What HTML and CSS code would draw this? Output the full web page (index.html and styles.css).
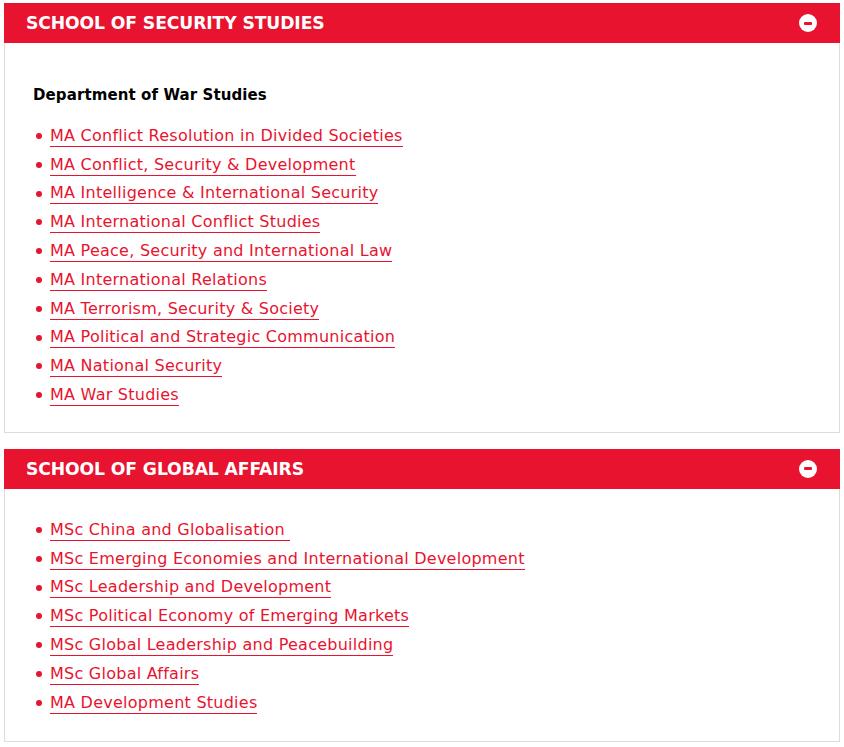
FILE: index.html
```html
<!DOCTYPE html>
<html>
<head>
<meta charset="utf-8">
<link rel="stylesheet" href="styles.css">
</head>
<body>
<div class="page">
  <section class="panel">
    <div class="panel-head">
      <h2 class="panel-title">SCHOOL OF SECURITY STUDIES</h2>
      <span class="toggle"><span class="toggle-bar"></span></span>
    </div>
    <div class="panel-body">
      <h3 class="dept">Department of War Studies</h3>
      <ul class="courses">
        <li><a href="#">MA Conflict Resolution in Divided Societies</a></li>
        <li><a href="#">MA Conflict, Security &amp; Development</a></li>
        <li><a href="#">MA Intelligence &amp; International Security</a></li>
        <li><a href="#">MA International Conflict Studies</a></li>
        <li><a href="#">MA Peace, Security and International Law</a></li>
        <li><a href="#">MA International Relations</a></li>
        <li><a href="#">MA Terrorism, Security &amp; Society</a></li>
        <li><a href="#">MA Political and Strategic Communication</a></li>
        <li><a href="#">MA National Security</a></li>
        <li><a href="#">MA War Studies</a></li>
      </ul>
    </div>
  </section>
  <section class="panel">
    <div class="panel-head">
      <h2 class="panel-title">SCHOOL OF GLOBAL AFFAIRS</h2>
      <span class="toggle"><span class="toggle-bar"></span></span>
    </div>
    <div class="panel-body panel-body-plain">
      <ul class="courses">
        <li><a href="#">MSc China and Globalisation&nbsp;</a></li>
        <li><a href="#">MSc Emerging Economies and International Development</a></li>
        <li><a href="#">MSc Leadership and Development</a></li>
        <li><a href="#">MSc Political Economy of Emerging Markets</a></li>
        <li><a href="#">MSc Global Leadership and Peacebuilding</a></li>
        <li><a href="#">MSc Global Affairs</a></li>
        <li><a href="#">MA Development Studies</a></li>
      </ul>
    </div>
  </section>
</div>
</body>
</html>
```
FILE: styles.css
```css
* { box-sizing: border-box; }
html, body { margin: 0; padding: 0; background: #fff; }
body { font-family: "DejaVu Sans", "Open Sans", sans-serif; color: #000; }
.page { padding: 3px 4px 0 4px; display: flex; flex-direction: column; gap: 16px; width: 844px; }
.panel { border: 1px solid #dcdcdc; border-top: none; }
.panel-head {
  height: 40px; background: #e8132f; display: flex; align-items: center;
  justify-content: space-between; padding: 0 23px 0 22px; margin: 0 -1px;
}
.panel-title { margin: 0; color: #fff; font-size: 17.2px; font-weight: bold; letter-spacing: -0.1px; }
.toggle {
  width: 18px; height: 18px; border-radius: 50%; background: #fff;
  display: flex; align-items: center; justify-content: center;
}
.toggle-bar { width: 8px; height: 3px; background: #e8132f; border-radius: 1px; }
.panel-body { padding: 43px 28px 22px 28px; }
.panel-body-plain { padding-top: 27px; padding-bottom: 23px; }
.dept { margin: 0 0 18px 0; font-size: 15px; font-weight: bold; letter-spacing: 0.1px; }
.courses { list-style: none; margin: 0; padding: 0; }
.courses li { position: relative; padding-left: 17px; height: 28.8px; display: flex; align-items: center; }
.courses li::before {
  content: ""; position: absolute; left: 3px; top: 11px; width: 6px; height: 6px;
  border-radius: 50%; background: #e8132f;
}
.courses a {
  color: #e8132f; text-decoration: none; font-size: 16px; border-bottom: 1px solid #e8132f;
  line-height: 20px; letter-spacing: 0.25px;
}
```
